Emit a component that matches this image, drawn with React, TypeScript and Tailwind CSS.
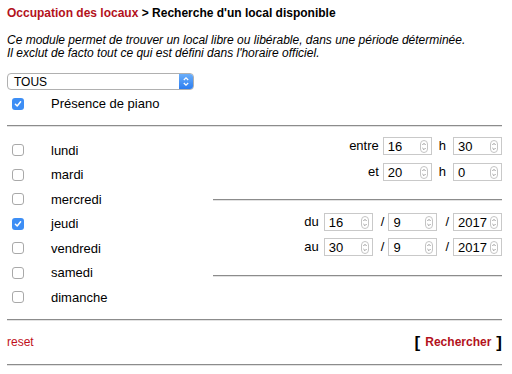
function Spinner() {
  return (
    <svg width="8" height="13" viewBox="0 0 8 13" className="shrink-0">
      <rect x="0.5" y="0.5" width="7" height="12" rx="3.5" fill="#fff" stroke="#c4c4c4" />
      <path d="M2.4 5 L4 3.4 L5.6 5" fill="none" stroke="#8a8a8a" strokeWidth="0.9" />
      <path d="M2.4 8 L4 9.6 L5.6 8" fill="none" stroke="#8a8a8a" strokeWidth="0.9" />
    </svg>
  );
}

function NumBox({ value }: { value: string }) {
  return (
    <div className="w-[49px] h-[18px] border border-[#c9c9c9] bg-white flex items-center justify-between pl-[4px] pr-[3px] text-[13px] leading-none">
      <span>{value}</span>
      <Spinner />
    </div>
  );
}

function Check({ checked }: { checked?: boolean }) {
  if (checked) {
    return (
      <div className="w-[12px] h-[12px] rounded-[3px] bg-[#3d8ef5] flex items-center justify-center shrink-0">
        <svg width="8" height="8" viewBox="0 0 8 8">
          <path d="M1.4 4.2 L3.2 6 L6.6 1.8" fill="none" stroke="#fff" strokeWidth="1.5" strokeLinecap="round" strokeLinejoin="round" />
        </svg>
      </div>
    );
  }
  return <div className="w-[12px] h-[12px] rounded-[3px] border border-[#a9a9a9] bg-white shrink-0" />;
}

function Rule() {
  return <div className="h-[2px] border-t border-[#8c8c8c] border-b border-b-[#e2e2e2]" />;
}

function Slash() {
  return <span className="ml-[8px] mr-[4px]">/</span>;
}

const days = [
  { name: "lundi" },
  { name: "mardi" },
  { name: "mercredi" },
  { name: "jeudi", checked: true },
  { name: "vendredi" },
  { name: "samedi" },
  { name: "dimanche" },
];

export default function App() {
  return (
    <div className="w-[512px] h-[374px] bg-white pl-[7px] pr-[10px] font-['Liberation_Sans',Arial,sans-serif] text-[13px] text-black overflow-hidden">
      <h1 className="pt-[5px] font-bold text-[12px] leading-[16px]">
        <span className="text-[#b3121c]">Occupation des locaux</span> &gt; Recherche d'un local disponible
      </h1>
      <p className="mt-[13px] italic text-[12px] leading-[13px]">
        Ce module permet de trouver un local libre ou libérable, dans une période déterminée.
        <br />
        Il exclut de facto tout ce qui est défini dans l'horaire officiel.
      </p>

      <div className="mt-[13px] w-[187px] h-[17px] rounded-[4px] border border-[#b0b0b0] flex items-center justify-between overflow-hidden">
        <span className="pl-[6px] text-[12px] leading-none">TOUS</span>
        <div className="w-[14px] h-full bg-gradient-to-b from-[#6aaefa] to-[#2b7df0] flex items-center justify-center">
          <svg width="8" height="11" viewBox="0 0 8 11">
            <path d="M1.8 4 L4 1.8 L6.2 4" fill="none" stroke="#fff" strokeWidth="1.2" />
            <path d="M1.8 7 L4 9.2 L6.2 7" fill="none" stroke="#fff" strokeWidth="1.2" />
          </svg>
        </div>
      </div>

      <div className="mt-[4px] h-[20px] flex items-center pl-[5px]">
        <Check checked />
        <span className="ml-[27px]">Présence de piano</span>
      </div>

      <div className="mt-[11px]">
        <Rule />
      </div>

      <div className="mt-[11px] flex">
        <div className="w-[206px] shrink-0">
          {days.map((d) => (
            <div key={d.name} className="h-[24.5px] flex items-center pl-[5px]">
              <Check checked={d.checked} />
              <span className="ml-[27px]">{d.name}</span>
            </div>
          ))}
        </div>

        <div className="flex-1 flex flex-col">
          <div className="flex items-center justify-end h-[18px] mt-[-1px]">
            <span className="mr-[4px]">entre</span>
            <NumBox value="16" />
            <span className="mx-[7px]">h</span>
            <NumBox value="30" />
          </div>
          <div className="flex items-center justify-end h-[18px] mt-[8px]">
            <span className="mr-[4px]">et</span>
            <NumBox value="20" />
            <span className="mx-[7px]">h</span>
            <NumBox value="0" />
          </div>
          <div className="mt-[18px]">
            <Rule />
          </div>
          <div className="flex items-center justify-end h-[18px] mt-[12px]">
            <span className="mr-[5px]">du</span>
            <NumBox value="16" />
            <Slash />
            <NumBox value="9" />
            <Slash />
            <NumBox value="2017" />
          </div>
          <div className="flex items-center justify-end h-[18px] mt-[7px]">
            <span className="mr-[5px]">au</span>
            <NumBox value="30" />
            <Slash />
            <NumBox value="9" />
            <Slash />
            <NumBox value="2017" />
          </div>
          <div className="mt-[19px]">
            <Rule />
          </div>
        </div>
      </div>

      <div className="mt-[9px]">
        <Rule />
      </div>
      <div className="h-[43px] flex items-center justify-between">
        <span className="text-[#c0101c] text-[12px]">reset</span>
        <span className="flex items-center">
          <span className="font-bold text-[17px] leading-none">[</span>
          <span className="mx-[5px] font-bold text-[12px] text-[#b3121c]">Rechercher</span>
          <span className="font-bold text-[17px] leading-none">]</span>
        </span>
      </div>
      <Rule />
    </div>
  );
}
